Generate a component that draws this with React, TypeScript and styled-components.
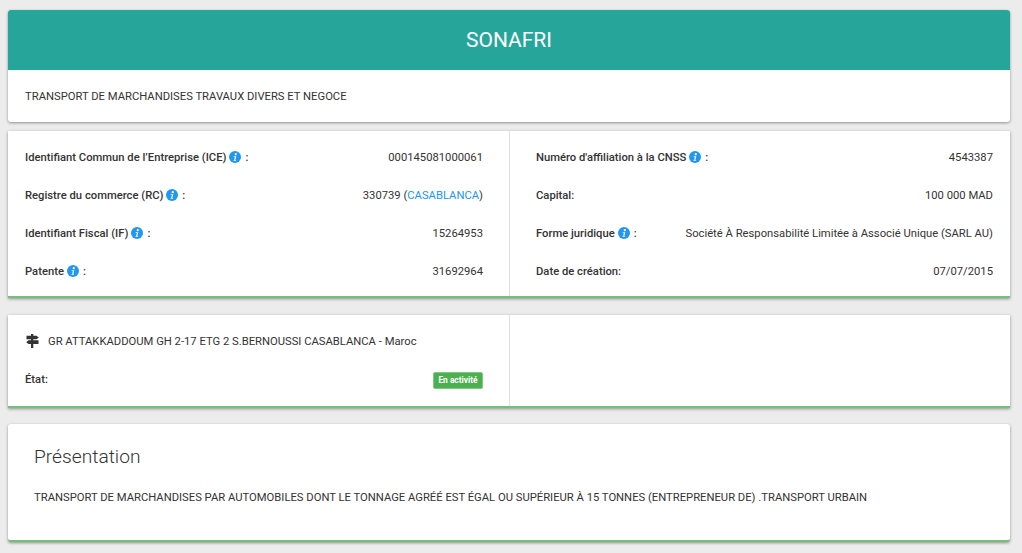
import React from "react";
import styled, { createGlobalStyle } from "styled-components";

const GlobalStyle = createGlobalStyle`
  html, body {
    margin: 0;
    height: 553px;
    overflow: hidden;
    background: #ececec;
    font-family: Roboto, "Liberation Sans", sans-serif;
    font-size: 11.24px;
    color: #333;
  }
`;

const Page = styled.div`
  display: flex;
  flex-direction: column;
  padding: 10px 12px 0 8px;
`;

const Card = styled.section<{ $gap: number; $height: number; $green?: boolean; $round?: boolean }>`
  height: ${(p) => p.$height}px;
  margin-bottom: ${(p) => p.$gap}px;
  background: #fff;
  border-radius: ${(p) => (p.$round ? "3px" : "0")};
  border-bottom: ${(p) => (p.$green ? "2px solid #74c078" : "none")};
  box-sizing: border-box;
  box-shadow: 0 1px 3px rgba(0, 0, 0, 0.4);
  overflow: hidden;
`;

const Banner = styled.header`
  height: 60px;
  background: #26a69a;
  color: #fff;
  font-size: 21px;
  line-height: 60px;
  text-align: center;
`;

const Activity = styled.p`
  margin: 0;
  padding: 20px 17px;
  line-height: 14px;
`;

const Columns = styled.div`
  display: grid;
  grid-template-columns: 502px 500px;
  height: 100%;
`;

const Column = styled.div<{ $side: "left" | "right" }>`
  display: flex;
  flex-direction: column;
  padding: ${(p) => (p.$side === "left" ? "7px 26px 0 17px" : "7px 17px 0 26px")};
  border-right: ${(p) => (p.$side === "left" ? "1px solid #e0e0e0" : "none")};
  box-sizing: border-box;
  min-width: 0;
`;

const Row = styled.div`
  display: flex;
  align-items: center;
  justify-content: space-between;
  height: 38px;
  flex: none;
`;

const Label = styled.span`
  display: flex;
  align-items: center;
  font-weight: 500;
  white-space: pre;
`;

const InfoSvg = styled.svg`
  width: 12px;
  height: 12px;
  margin: 0 4px 0 3px;
  flex: none;
`;

const Link = styled.span`
  color: #2196f3;
`;

const Address = styled.div`
  display: flex;
  align-items: center;
  height: 38px;
  flex: none;
`;

const SignSvg = styled.svg`
  width: 13px;
  height: 14px;
  margin: 0 9px 0 1px;
  flex: none;
`;

const Badge = styled.span`
  box-sizing: border-box;
  width: 50px;
  height: 17px;
  margin-top: 2px;
  line-height: 15px;
  text-align: center;
  border: 1px solid #81c784;
  border-radius: 2px;
  background: #4caf50;
  color: #fff;
  font-size: 8.4px;
  font-weight: 700;
`;

const Presentation = styled.div`
  padding: 21px 26px;
`;

const Title = styled.h2`
  margin: 0 0 22px;
  font-size: 19.2px;
  line-height: 24px;
  font-weight: 300;
`;

const Body = styled.p`
  margin: 0;
  line-height: 14px;
`;

type Field = { label: string; info?: boolean; value: React.ReactNode };

const left: Field[] = [
  { label: "Identifiant Commun de l’Entreprise (ICE)", info: true, value: "000145081000061" },
  {
    label: "Registre du commerce (RC)",
    info: true,
    value: (
      <span>
        330739 (<Link>CASABLANCA</Link>)
      </span>
    ),
  },
  { label: "Identifiant Fiscal (IF)", info: true, value: "15264953" },
  { label: "Patente", info: true, value: "31692964" },
];

const right: Field[] = [
  { label: "Numéro d'affiliation à la CNSS", info: true, value: "4543387" },
  { label: "Capital:", value: "100 000 MAD" },
  {
    label: "Forme juridique",
    info: true,
    value: "Société À Responsabilité Limitée à Associé Unique (SARL AU)",
  },
  { label: "Date de création:", value: "07/07/2015" },
];

function InfoIcon() {
  return (
    <InfoSvg viewBox="0 0 24 24">
      <circle cx="12" cy="12" r="12" fill="#2196f3" />
      <circle cx="13.6" cy="6.4" r="2.2" fill="#fff" />
      <path d="M9.6 10.4h5l-1.9 7.4h1.5l-.4 1.8H8.9l.4-1.8h1.1l1.2-5.6H9.2z" fill="#fff" />
    </InfoSvg>
  );
}

function SignIcon() {
  return (
    <SignSvg viewBox="0 0 13 14">
      <path d="M5 0h2.3v14H5z" fill="#333" />
      <path d="M0.5 1.7h10l2.3 1.8-2.3 1.8H0.5z" fill="#333" />
      <path d="M12.5 6.3H2.5L0.2 8.15l2.3 1.85h10z" fill="#333" />
    </SignSvg>
  );
}

function FieldRow({ field }: { field: Field }) {
  return (
    <Row>
      <Label>
        {field.label}
        {field.info && (
          <>
            <InfoIcon />:
          </>
        )}
      </Label>
      <span>{field.value}</span>
    </Row>
  );
}

export default function App() {
  return (
    <Page>
      <GlobalStyle />
      <Card $height={112} $gap={9} $round>
        <Banner>SONAFRI</Banner>
        <Activity>TRANSPORT DE MARCHANDISES TRAVAUX DIVERS ET NEGOCE</Activity>
      </Card>
      <Card $height={167} $gap={17} $green>
        <Columns>
          <Column $side="left">
            {left.map((f) => (
              <FieldRow key={f.label} field={f} />
            ))}
          </Column>
          <Column $side="right">
            {right.map((f) => (
              <FieldRow key={f.label} field={f} />
            ))}
          </Column>
        </Columns>
      </Card>
      <Card $height={93} $gap={16} $green>
        <Columns>
          <Column $side="left">
            <Address>
              <SignIcon />
              GR ATTAKKADDOUM GH 2-17 ETG 2 S.BERNOUSSI CASABLANCA - Maroc
            </Address>
            <Row>
              <Label>État:</Label>
              <Badge>En activité</Badge>
            </Row>
          </Column>
          <Column $side="right" />
        </Columns>
      </Card>
      <Card $height={118} $gap={0} $green $round>
        <Presentation>
          <Title>Présentation</Title>
          <Body>
            TRANSPORT DE MARCHANDISES PAR AUTOMOBILES DONT LE TONNAGE AGRÉÉ EST ÉGAL OU SUPÉRIEUR À 15 TONNES (ENTREPRENEUR DE) .TRANSPORT URBAIN
          </Body>
        </Presentation>
      </Card>
    </Page>
  );
}
